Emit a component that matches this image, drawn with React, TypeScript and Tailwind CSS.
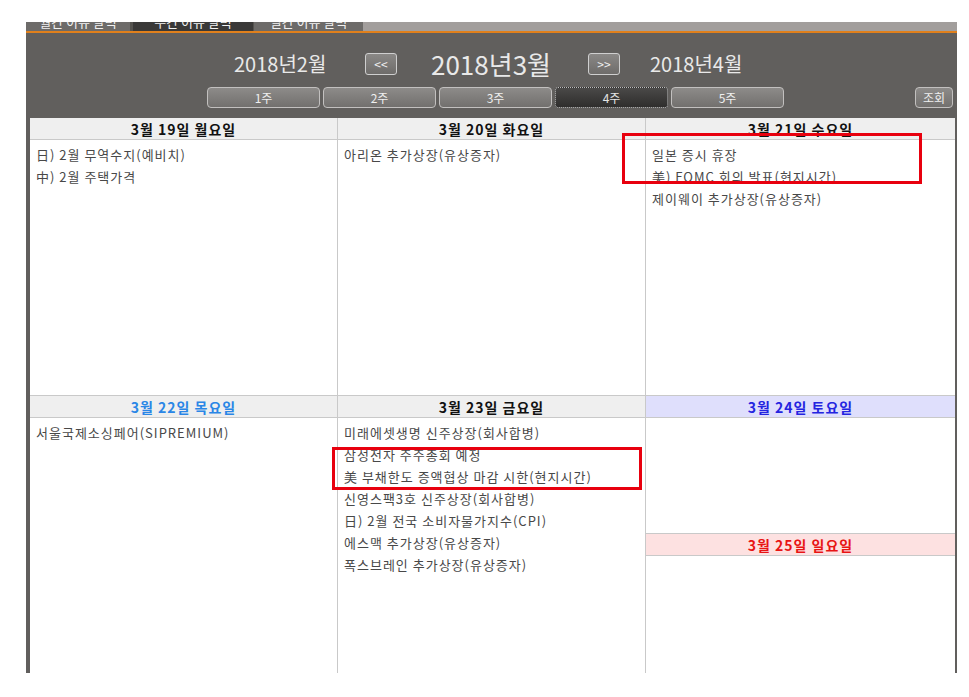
import React from "react";

const font = { fontFamily: '"Noto Sans CJK KR", "Noto Sans", sans-serif' };

type Item = string;

function Header({ label, cls }: { label: string; cls: string }) {
  return (
    <div
      className={`h-[22px] flex items-center justify-center border-b border-[#c9c9c9] text-[14px] font-bold leading-none tracking-[1px] ${cls}`}
    >
      {label}
    </div>
  );
}

function Body({ items, cls = "" }: { items: Item[]; cls?: string }) {
  return (
    <div className={`pt-[4px] pl-[6px] text-[13px] leading-[22px] tracking-[1px] text-[#484848] ${cls}`}>
      {items.map((t, i) => (
        <div key={i} className="whitespace-nowrap">
          {t}
        </div>
      ))}
    </div>
  );
}

function WeekBtn({ label, active = false }: { label: string; active?: boolean }) {
  return active ? (
    <div className="w-[113px] h-[21px] rounded-[3px] border border-dotted border-[#bdbdbd] bg-gradient-to-b from-[#4a4948] to-[#2f2e2d] flex items-center justify-center text-[12px] text-[#e4e4e4] leading-none">
      {label}
    </div>
  ) : (
    <div className="w-[113px] h-[21px] rounded-[4px] border border-[#c2c0bf] bg-gradient-to-b from-[#8d8b89] to-[#72706e] flex items-center justify-center text-[12px] text-[#efefef] leading-none">
      {label}
    </div>
  );
}

function ArrowBtn({ label }: { label: string }) {
  return (
    <div className="w-[32px] h-[22px] rounded-[3px] border border-[#cfcfcf] bg-gradient-to-b from-[#8a8886] to-[#6e6c6a] flex items-center justify-center text-[12px] text-[#f0f0f0] leading-none">
      {label}
    </div>
  );
}

function Tab({ label, w, active = false }: { label: string; w: string; active?: boolean }) {
  return (
    <div
      className={`${w} h-[9px] overflow-hidden flex justify-center ${active ? "bg-[#3a3938]" : "bg-[#6d6b69]"}`}
    >
      <span className="text-[13px] leading-[16px] mt-[-8px] text-[#f2f2f2] whitespace-nowrap">{label}</span>
    </div>
  );
}

export default function App() {
  return (
    <div className="relative w-[969px] h-[697px] bg-white overflow-hidden" style={font}>
      <div className="h-[22px]" />
      <div className="ml-[26px] w-[931px] h-[651px] bg-[#615f5d] flex flex-col">
        {/* tab strip */}
        <div className="flex h-[9px] bg-[#55534f]">
          <Tab label="월간 이슈 달력" w="w-[104px]" />
          <div className="w-[3px]" />
          <Tab label="주간 이슈 달력" w="w-[120px]" active />
          <div className="w-[1px]" />
          <Tab label="일간 이슈 달력" w="w-[109px]" />
          <div className="flex-1 bg-[#a29e9c]" />
        </div>
        <div className="h-[2px] bg-[#e0801c]" />

        {/* month nav */}
        <div className="mt-[18px] h-[28px] flex items-center pl-[208px] text-[#e9e9e9]">
          <div className="w-[131px] text-[20px] leading-none">2018년2월</div>
          <ArrowBtn label="<<" />
          <div className="w-[34px]" />
          <div className="w-[157px] text-[26px] leading-none">2018년3월</div>
          <ArrowBtn label=">>" />
          <div className="w-[30px]" />
          <div className="text-[20px] leading-none">2018년4월</div>
        </div>

        {/* week buttons */}
        <div className="mt-[9px] h-[21px] flex items-center pl-[181px] pr-[4px]">
          <div className="flex gap-[3px]">
            <WeekBtn label="1주" />
            <WeekBtn label="2주" />
            <WeekBtn label="3주" />
            <WeekBtn label="4주" active />
            <WeekBtn label="5주" />
          </div>
          <div className="ml-auto w-[38px] h-[21px] rounded-[4px] border border-[#c2c0bf] bg-gradient-to-b from-[#8d8b89] to-[#72706e] flex items-center justify-center text-[12px] text-[#efefef] leading-none">
            조회
          </div>
        </div>

        {/* table */}
        <div className="mt-[10px] ml-[4px] mr-[2px] flex-1 bg-white grid grid-cols-[308px_308px_309px] grid-rows-[278px_277px]">
          <div className="flex flex-col border-r border-[#c9c9c9] border-b">
            <Header label="3월 19일 월요일" cls="bg-[#efefef] text-[#111]" />
            <Body items={["日) 2월 무역수지(예비치)", "中) 2월 주택가격"]} />
          </div>
          <div className="flex flex-col border-r border-[#c9c9c9] border-b">
            <Header label="3월 20일 화요일" cls="bg-[#efefef] text-[#111]" />
            <Body items={["아리온 추가상장(유상증자)"]} />
          </div>
          <div className="flex flex-col border-[#c9c9c9] border-b">
            <Header label="3월 21일 수요일" cls="bg-[#efefef] text-[#111]" />
            <Body items={["일본 증시 휴장", "美) FOMC 회의 발표(현지시간)", "제이웨이 추가상장(유상증자)"]} />
          </div>

          <div className="flex flex-col border-r border-[#c9c9c9]">
            <Header label="3월 22일 목요일" cls="bg-[#efefef] text-[#2a86e6]" />
            <Body items={["서울국제소싱페어(SIPREMIUM)"]} />
          </div>
          <div className="flex flex-col border-r border-[#c9c9c9]">
            <Header label="3월 23일 금요일" cls="bg-[#efefef] text-[#111]" />
            <Body
              items={[
                "미래에셋생명 신주상장(회사합병)",
                "삼성전자 주주총회 예정",
                "美 부채한도 증액협상 마감 시한(현지시간)",
                "신영스팩3호 신주상장(회사합병)",
                "日) 2월 전국 소비자물가지수(CPI)",
                "에스맥 추가상장(유상증자)",
                "폭스브레인 추가상장(유상증자)",
              ]}
            />
          </div>
          <div className="flex flex-col">
            <Header label="3월 24일 토요일" cls="bg-[#dfdffc] text-[#2424e0]" />
            <div className="h-[116px] border-b border-[#c9c9c9]" />
            <Header label="3월 25일 일요일" cls="bg-[#fde1e1] text-[#e81414]" />
            <div className="flex-1" />
          </div>
        </div>
      </div>

      {/* annotation boxes */}
      <div className="absolute left-[622px] top-[133px] w-[300px] h-[51px] border-[3px] border-[#e8000e]" />
      <div className="absolute left-[332px] top-[447px] w-[310px] h-[43px] border-[3px] border-[#e8000e]" />
    </div>
  );
}
